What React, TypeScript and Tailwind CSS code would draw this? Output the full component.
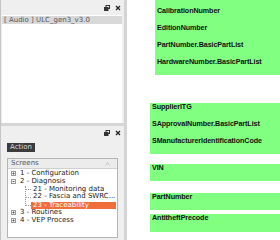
import React from "react";

const FloatIcon = () => (
  <svg width="6" height="6" viewBox="0 0 6 6" className="block">
    <rect x="2" y="0.5" width="3.5" height="3" fill="none" stroke="#333" strokeWidth="1" />
    <rect x="0.5" y="2.5" width="3.5" height="3" fill="#333" stroke="#333" strokeWidth="1" />
  </svg>
);

const CloseIcon = () => (
  <svg width="6" height="6" viewBox="0 0 6 6" className="block">
    <path d="M1 1 L5 5 M5 1 L1 5" stroke="#222" strokeWidth="1.3" />
  </svg>
);

const TitleBar = ({ h }: { h: string }) => (
  <div className={`flex items-center justify-end gap-[5px] pr-[3px] ${h}`}>
    <FloatIcon />
    <CloseIcon />
  </div>
);

const Box = ({ minus }: { minus?: boolean }) => (
  <svg width="5" height="5" viewBox="0 0 5 5" className="block">
    <rect x="0.5" y="0.5" width="4" height="4" fill="#fff" stroke="#999" strokeWidth="1" />
    <path d="M1.5 2.5 H3.5" stroke="#333" strokeWidth="0.8" />
    {!minus && <path d="M2.5 1.5 V3.5" stroke="#333" strokeWidth="0.8" />}
  </svg>
);

const Row = ({ label }: { label: string }) => (
  <div className="h-[17px] pl-[2px] text-[7.2px] leading-[7px] font-bold text-[#111] tracking-[-0.1px]" style={{ fontFamily: '"Liberation Sans", Arial, sans-serif' }}>
    {label}
  </div>
);

export default function App() {
  const ui = { fontFamily: '"DejaVu Sans", sans-serif' };
  return (
    <div className="w-[280px] h-[240px] flex bg-white overflow-hidden" style={ui}>
      {/* left column */}
      <div className="w-[124px] flex flex-col bg-[#efefef] border-l border-[#c4c4c4]">
        {/* upper panel */}
        <div className="h-[123px] flex flex-col">
          <TitleBar h="h-[15px]" />
          <div className="flex-1 bg-white ml-[1px] mr-[2px] pt-[1px]">
            <div className="h-[8px] bg-[#d9d9d9] text-[7px] leading-[8px] text-[#555] pl-[2px] whitespace-nowrap">
              [ Audio ] ULC_gen3_v3.0
            </div>
          </div>
        </div>
        <div className="h-[3px] bg-[#d6d6d6]" />
        {/* lower panel */}
        <div className="flex-1 flex flex-col">
          <TitleBar h="h-[13px]" />
          <div className="pl-[6px] pt-[4px]">
            <div className="w-[28px] h-[9px] bg-[#3c3c3c] text-[#dcdcdc] text-[7px] leading-[9px] text-center">
              Action
            </div>
          </div>
          <div className="mt-[6px] ml-[6px] w-[111px] flex-1 bg-white border border-[#b4b4b4] text-[7px] leading-[7.8px] text-[#222]">
            <div className="h-[10px] bg-[#ececec] border-b border-[#d0d0d0] flex items-center justify-between pl-[3px] pr-[7px] text-[#555]">
              <span>Screens</span>
              <svg width="5" height="4" viewBox="0 0 5 4">
                <path d="M0.5 3.5 L2.5 0.5 L4.5 3.5" fill="none" stroke="#bbb" strokeWidth="0.8" />
              </svg>
            </div>
            <div className="pt-[1px] relative">
              <div className="flex items-center h-[7.8px] pl-[3px] gap-[4px] whitespace-nowrap"><Box /><span>1 - Configuration</span></div>
              <div className="flex items-center h-[7.8px] pl-[3px] gap-[4px] whitespace-nowrap"><Box minus /><span>2 - Diagnosis</span></div>
              <div className="flex items-center h-[7.8px] pl-[17px] whitespace-nowrap">
                <span className="w-[6px] border-t border-dotted border-[#999] mr-[2px]" />
                <span>21 - Monitoring data</span>
              </div>
              <div className="flex items-center h-[7.8px] pl-[17px] whitespace-nowrap">
                <span className="w-[6px] border-t border-dotted border-[#999] mr-[2px]" />
                <span>22 - Fascia and SWRC...</span>
              </div>
              <div className="flex items-center h-[7.8px] pl-[17px] whitespace-nowrap">
                <span className="w-[6px] border-t border-dotted border-[#999]" />
                <span className="flex-1 bg-[#ef6e3a] text-white pl-[2px] h-[7px] leading-[7px] mr-[1px]">23 - Traceability</span>
              </div>
              <div className="flex items-center h-[7.8px] pl-[3px] gap-[4px] whitespace-nowrap"><Box /><span>3 - Routines</span></div>
              <div className="flex items-center h-[7.8px] pl-[3px] gap-[4px] whitespace-nowrap"><Box /><span>4 - VEP Process</span></div>
              <div className="absolute left-[17px] top-[17px] h-[20px] border-l border-dotted border-[#999]" />
            </div>
          </div>
          <div className="h-[2px]" />
        </div>
      </div>
      {/* splitter */}
      <div className="w-[3px] bg-[#d4d4d4]" />
      {/* right area */}
      <div className="flex-1 flex flex-col">
        <div className="ml-[28px] bg-[#80ff80] pt-[7px]">
          <Row label="CalibrationNumber" />
          <Row label="EditionNumber" />
          <Row label="PartNumber.BasicPartList" />
          <Row label="HardwareNumber.BasicPartList" />
        </div>
        <div className="ml-[23px] mt-[28px] bg-[#80ff80]">
          <Row label="SupplierITG" />
          <Row label="SApprovalNumber.BasicPartList" />
          <Row label="SManufacturerIdentificationCode" />
        </div>
        <div className="ml-[23px] mt-[10px] bg-[#80ff80]">
          <Row label="VIN" />
        </div>
        <div className="ml-[23px] mt-[12px] bg-[#80ff80]">
          <Row label="PartNumber" />
        </div>
        <div className="ml-[23px] mt-[4px] bg-[#80ff80] pb-[1px]">
          <Row label="AntitheftPrecode" />
        </div>
      </div>
    </div>
  );
}
